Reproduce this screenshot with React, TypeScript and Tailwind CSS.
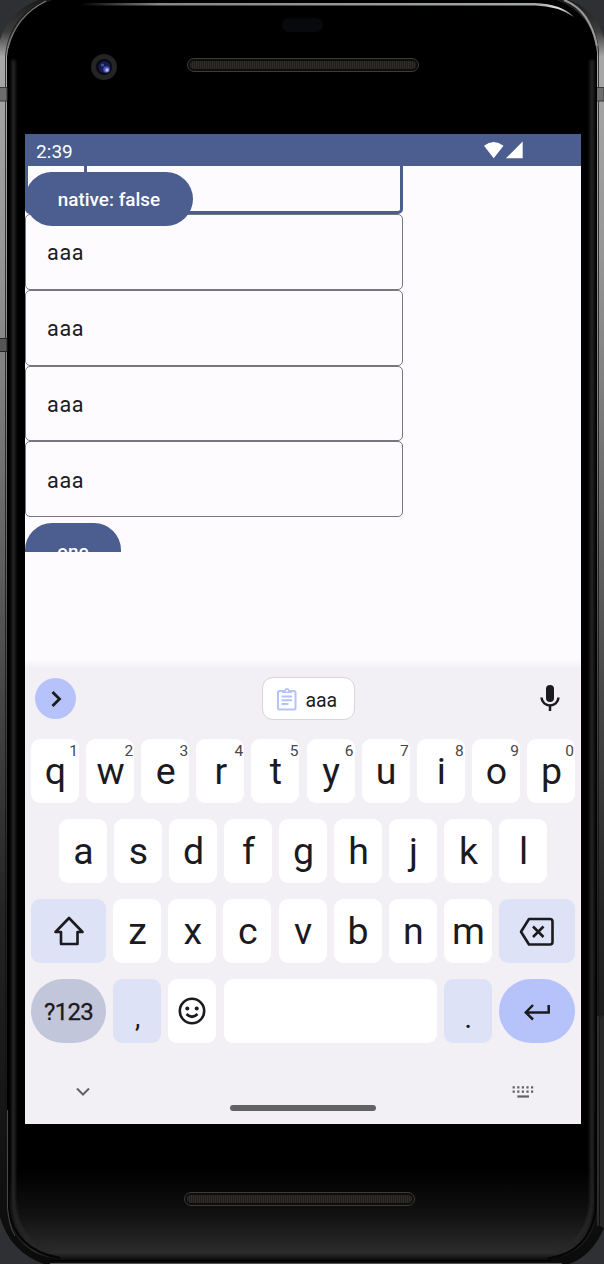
import React from "react";

type LetterKey = { label: string; hint?: string };

const topRow: LetterKey[] = "qwertyuiop"
  .split("")
  .map((label, i) => ({ label, hint: String((i + 1) % 10) }));
const homeRow: LetterKey[] = "asdfghjkl".split("").map((label) => ({ label }));
const bottomRow: LetterKey[] = "zxcvbnm".split("").map((label) => ({ label }));

function DeviceFrame() {
  return (
    <svg className="absolute inset-0" width="604" height="1264" viewBox="0 0 604 1264" aria-hidden="true">
      <defs>
        <linearGradient id="side" x1="0" y1="0" x2="0" y2="1264" gradientUnits="userSpaceOnUse">
          <stop offset="0" stopColor="#1c1c1c" />
          <stop offset="0.025" stopColor="#3c3c3c" />
          <stop offset="0.045" stopColor="#a8a8a8" />
          <stop offset="0.2" stopColor="#969696" />
          <stop offset="0.38" stopColor="#6e6e6e" />
          <stop offset="0.54" stopColor="#484848" />
          <stop offset="0.72" stopColor="#242424" />
          <stop offset="1" stopColor="#0b0b0b" />
        </linearGradient>
        <linearGradient id="face" x1="0" y1="1170" x2="0" y2="1260" gradientUnits="userSpaceOnUse">
          <stop offset="0" stopColor="#000" />
          <stop offset="0.5" stopColor="#111" />
          <stop offset="0.92" stopColor="#2c2c2c" />
          <stop offset="1" stopColor="#0c0c0c" />
        </linearGradient>
        <linearGradient id="shine" x1="80" y1="0" x2="574" y2="0" gradientUnits="userSpaceOnUse">
          <stop offset="0" stopColor="#000" />
          <stop offset="0.16" stopColor="#858787" />
          <stop offset="0.93" stopColor="#a5a9a9" />
          <stop offset="0.97" stopColor="#dfe6e5" />
          <stop offset="1" stopColor="#777" />
        </linearGradient>
        <filter id="soft" x="-20" y="0" width="640" height="1264" filterUnits="userSpaceOnUse">
          <feGaussianBlur stdDeviation="1.6" />
        </filter>
      </defs>
      <path d="M0 40Q8 12 38 0H569Q596 10 604 38V1228Q592 1256 569 1264H44Q10 1252 0 1217Z" fill="url(#side)" />
      <path d="M5.500 1210V55Q10 14 50 -1H562Q594 12 598.500 50V1210" fill="none" stroke="#111" strokeWidth="1" opacity=".75" />
      <path d="M7 56Q12 14 52 0H556Q592 12 597 52V1212Q592 1254 546 1260H62Q14 1255 7 1210Z" fill="url(#face)" />
      <path
        d="M13.500 60V1200Q15 1240 50 1253M592 60V1200Q590 1240 556 1253"
        fill="none"
        stroke="#262626"
        strokeWidth="4"
        filter="url(#soft)"
      />
      <path d="M8.500 1110V1208Q14 1250 60 1258M595.500 1110V1210Q590 1252 548 1258.500" fill="none" stroke="#050505" strokeWidth="2" />
      <path d="M7.500 1110V1208Q9 1226 15 1236M598 1016V1226" fill="none" stroke="#484848" strokeWidth="1" />
      <path d="M8 48Q16 16 46 1" fill="none" stroke="#777" strokeWidth="1.200" />
      <path d="M564 0Q590 10 597 46" fill="none" stroke="#999" strokeWidth="2" />
      <path d="M80 3H535Q562 4 574 17Q558 6 535 5.500H80Z" fill="url(#shine)" />
      <path d="M0 87.500H7V101H0M597 87.500H604V101H597" fill="#6d6d6d" stroke="#3a3a3a" />
      <path d="M0 338.500H7V351.500H0" fill="#555" stroke="#252525" />
      <path d="M600 1226V1020Q600 1016 604 1015V1228Z" fill="#272727" />
      <path d="M50 1263.500H562" stroke="#545454" strokeWidth="1" />
      <path d="M50 1260.500H552" stroke="#000" strokeWidth="1" />
    </svg>
  );
}

function Speaker({ className }: { className: string }) {
  return (
    <div
      className={`absolute h-[14px] rounded-full border border-[#3d3c3a] bg-[#0d0d0c] p-[2px] ${className}`}
    >
      <div className="h-full w-full rounded-full bg-[repeating-linear-gradient(90deg,#302e29_0px,#302e29_1px,#1f1e1b_1px,#1f1e1b_2px)]" />
    </div>
  );
}

function Camera() {
  return (
    <svg className="absolute left-[90px] top-[53px]" width="28" height="28" viewBox="0 0 28 28" aria-hidden="true">
      <circle cx="14" cy="14" r="13" fill="#242424" />
      <circle cx="14" cy="14" r="8" fill="#080912" />
      <circle cx="14.500" cy="14" r="6" fill="#161d4e" />
      <circle cx="12.500" cy="12" r="1.600" fill="#4451a2" />
      <circle cx="16.500" cy="16.500" r="3.200" fill="#4b57b8" />
      <circle cx="17" cy="17" r="1.700" fill="#b9bff2" />
    </svg>
  );
}

function StatusBar() {
  return (
    <div className="flex h-[32px] shrink-0 items-center justify-between bg-[#4c5d90] pl-[11px] pr-[58px] text-white">
      <span className="pt-[2px] text-[19px] leading-none tracking-[0.05px]">2:39</span>
      <svg width="40" height="18" viewBox="0 0 40 18" fill="#fff" aria-hidden="true">
        <path d="M1 4.800Q10.700-2.600 20.500 4.800L10.700 17.300Z" />
        <path d="M39.700 .6V17.300H22.800Z" />
      </svg>
    </div>
  );
}

function Field() {
  return (
    <div className="flex h-[75.700px] w-[378px] shrink-0 items-center rounded-[5px] border-[1.500px] border-[#78767f] pl-[21px] pt-[2px] text-[21.600px] leading-none tracking-[0.68px] text-[#1b1b1f]">
      aaa
    </div>
  );
}

function AppContent() {
  return (
    <div className="relative h-[385.500px] shrink-0 overflow-hidden">
      <div className="flex flex-col">
        <div className="-mt-[27.300px] flex h-[75.700px] w-[378px] shrink-0 items-center rounded-[5px] border-[3px] border-[#4c5d90] pl-[19px] pt-[1px] text-[21.600px] leading-none tracking-[0.68px] text-[#1b1b1f]">
          aaa
          <span className="-ml-[0.500px] h-[30px] w-[3px] bg-[#4c5d90]" />
        </div>
        <Field />
        <Field />
        <Field />
        <Field />
        <button className="mt-[6px] h-[54px] w-[96px] shrink-0 rounded-full bg-[#4c5d90] pt-[4px] text-[18.900px] font-medium text-white">
          one
        </button>
      </div>
      <button className="absolute left-0 top-[6px] h-[54px] w-[168px] rounded-full bg-[#4c5d90] pt-[3px] text-[18.900px] font-medium text-white">
        native: false
      </button>
    </div>
  );
}

function Letter({ label, hint }: LetterKey) {
  return (
    <div className="relative flex h-[64px] w-[48px] shrink-0 justify-center rounded-[9px] bg-white pl-[1px] text-[37.500px] leading-[64px] text-[#1b1b1f]">
      {label}
      {hint && (
        <span className="absolute right-[1px] top-[4px] text-[15.500px] leading-[17px] text-[#46464b]">{hint}</span>
      )}
    </div>
  );
}

function Keyboard() {
  return (
    <div className="flex h-[457px] shrink-0 flex-col bg-[#f2f0f5] text-[#1b1b1f]">
      <div className="flex h-[72px] items-start justify-between pl-[10px] pr-[19px]">
        <div className="mt-[11px] flex h-[41px] w-[41px] items-center justify-center rounded-full bg-[#b5c3fa]">
          <svg width="16" height="20" viewBox="0 0 16 20" fill="none" stroke="#1b1b1f" strokeWidth="2.800">
            <path d="M4.500 3L11.500 10L4.500 17" />
          </svg>
        </div>
        <div className="ml-[3px] mt-[10px] flex h-[43px] w-[93px] items-center rounded-[11px] border border-[#d6d5da] bg-white pl-[12.500px]">
          <svg width="22" height="24" viewBox="0 0 22 24" fill="none" stroke="#b5c3fa" strokeWidth="2">
            <rect x="2" y="4" width="17.500" height="18.500" rx="1.500" />
            <path d="M5.500 9.500H16M5.500 13.300H16M5.500 17H12.500" strokeWidth="1.900" />
            <path d="M6 6V3.500H8.500A2.500 2.500 0 0 1 13.500 3.500H16V6Z" fill="#b5c3fa" stroke="none" />
            <circle cx="11" cy="3.800" r="1.100" fill="#fff" stroke="none" />
          </svg>
          <span className="ml-[8px] mt-[4px] text-[19.500px] leading-none tracking-[-0.050px]">aaa</span>
        </div>
        <svg className="mt-[17px]" width="24" height="30" viewBox="0 0 24 30" fill="none" stroke="#1b1b1f">
          <rect x="8" y="1" width="8" height="17" rx="4" fill="#1b1b1f" stroke="none" />
          <path d="M3.500 13.500C4 24 20 24 20.500 13.500M12 21V27" strokeWidth="2.500" />
        </svg>
      </div>

      <div className="flex flex-col gap-[16px] px-[6px]">
        <div className="flex justify-between">
          {topRow.map((k) => (
            <Letter key={k.label} {...k} />
          ))}
        </div>
        <div className="flex justify-between px-[28px]">
          {homeRow.map((k) => (
            <Letter key={k.label} {...k} />
          ))}
        </div>
        <div className="flex justify-between">
          <div className="flex h-[64px] w-[75px] items-center justify-center rounded-[9px] bg-[#dde2f6]">
            <svg width="34" height="32" viewBox="0 0 34 32" fill="none" stroke="#1b1b1f" strokeWidth="2.600" strokeLinejoin="round">
              <path d="M17 3L30.500 17H25.500V29H9V17H3.500Z" />
            </svg>
          </div>
          {bottomRow.map((k) => (
            <Letter key={k.label} {...k} />
          ))}
          <div className="flex h-[64px] w-[76px] items-center justify-center rounded-[9px] bg-[#dde2f6]">
            <svg width="38" height="30" viewBox="0 0 38 30" fill="none" stroke="#1b1b1f" strokeWidth="2.600" strokeLinejoin="round">
              <path d="M11 3H32Q34.500 3 34.500 5.500V26Q34.500 28.500 32 28.500H11L3 15.700Z" />
              <path d="M15 10.500L25.500 21M25.500 10.500L15 21" />
            </svg>
          </div>
        </div>
        <div className="flex justify-between">
          <div className="flex h-[64px] w-[75px] items-center justify-center rounded-full bg-[#c2c6da] pt-[2px] text-[24px] tracking-[-0.700px] [-webkit-text-stroke:0.3px_#1b1b1f]">
            ?123
          </div>
          <div className="flex h-[64px] w-[48px] justify-center rounded-[9px] bg-[#dde2f6] pl-[1px] text-[27px] leading-[78px]">,</div>
          <div className="flex h-[64px] w-[48px] items-center justify-center rounded-[9px] bg-white">
            <svg width="28" height="28" viewBox="0 0 28 28" fill="none" stroke="#1b1b1f" strokeWidth="2.600">
              <circle cx="14" cy="14" r="12.200" />
              <circle cx="9.300" cy="11.500" r="2" fill="#1b1b1f" stroke="none" />
              <circle cx="18.700" cy="11.500" r="2" fill="#1b1b1f" stroke="none" />
              <path d="M8.500 17Q14 22.500 19.500 17" />
            </svg>
          </div>
          <div className="h-[64px] w-[213px] rounded-[9px] bg-white" />
          <div className="flex h-[64px] w-[48px] justify-center rounded-[9px] bg-[#dde2f6] pl-[1px] text-[30px] leading-[77px]">.</div>
          <div className="flex h-[64px] w-[76px] items-center justify-center rounded-full bg-[#b5c3fa]">
            <svg className="mt-[2px]" width="28" height="18" viewBox="0 0 28 18" fill="none" stroke="#1b1b1f" strokeWidth="2.500">
              <path d="M25.700 2V9.500H3M10 2L2.800 9.500L10 16.500" />
            </svg>
          </div>
        </div>
      </div>

      <div className="flex h-[81px] items-start justify-between pl-[51px] pr-[46px]">
        <svg className="mt-[43px]" width="15" height="12" viewBox="0 0 15 12" fill="none" stroke="#626166" strokeWidth="2">
          <path d="M1 2.500L7 8.500L13 2.500" />
        </svg>
        <div className="ml-[3px] mt-[62px] h-[5.500px] w-[146px] rounded-full bg-[#626164]" />
        <svg className="mt-[42px]" width="23" height="14" viewBox="0 0 23 14" fill="none" stroke="#626166" strokeWidth="2.200">
          <path d="M.6 2.300H22" strokeDasharray="2.200 2.400" />
          <path d="M.6 6.700H22" strokeDasharray="2.200 2.400" />
          <path d="M5.300 11.500H17" />
        </svg>
      </div>
    </div>
  );
}

export default function App() {
  return (
    <div className="relative flex h-[1264px] w-[604px] flex-col overflow-hidden bg-[#2f3033] font-[Roboto,sans-serif]">
      <DeviceFrame />
      <div className="relative h-[134px] shrink-0">
        <div className="absolute left-[282px] top-[18px] h-[14px] w-[41px] rounded-full bg-[#07090d]" />
        <Camera />
        <Speaker className="left-[187px] top-[58px] w-[232px]" />
      </div>
      <div className="relative ml-[25px] flex h-[990px] w-[556px] shrink-0 flex-col bg-[#fefbff]">
        <StatusBar />
        <AppContent />
        <div className="flex grow flex-col justify-end">
          <div className="h-[8px] bg-linear-to-b from-[#fefbff] to-[#f5f2f7]" />
        </div>
        <Keyboard />
      </div>
      <div className="relative grow">
        <Speaker className="left-[184px] top-[68px] w-[231px]" />
      </div>
    </div>
  );
}
